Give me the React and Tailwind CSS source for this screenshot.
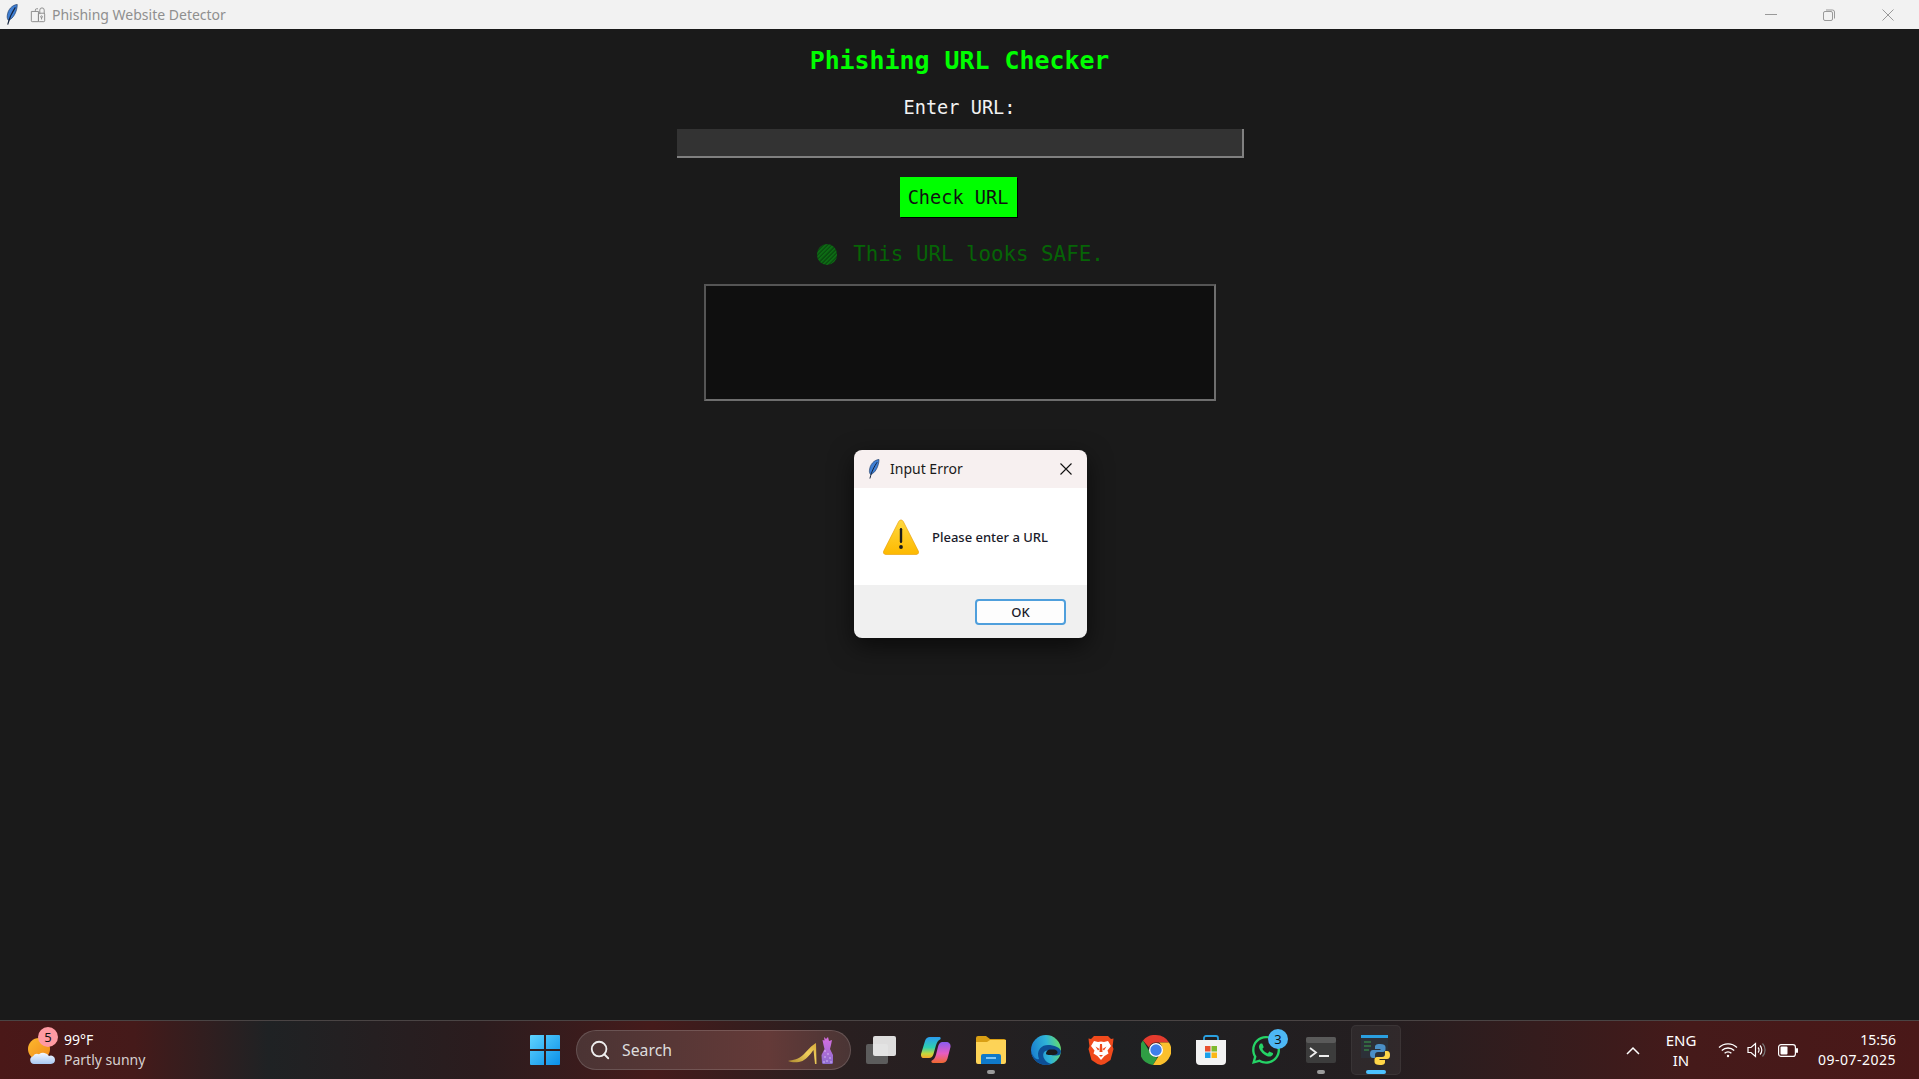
import React from 'react';
import { FaWhatsapp } from 'react-icons/fa';
import { Search } from 'lucide-react';

const Feather = ({ className }) => (
  <svg viewBox="0 0 12 22" className={className}>
    <path d="M11.500 .5C6 1 1.500 6 1 12.500c-.2 2 .3 3.500 1.200 4.500C7 16 11.500 8 11.500 .5z" fill="#3f7fd4" stroke="#1d3a66" strokeWidth="0.7" />
    <path d="M9.500 3.500C6.500 8 3.500 13 1.500 21.500" fill="none" stroke="#14233d" strokeWidth="1.100" />
  </svg>
);

const AppLockIcon = () => (
  <svg viewBox="0 0 18 18" className="w-[16px] h-[16px]" fill="none" stroke="#8c8c8c" strokeWidth="1.100">
    <path d="M6 5V3.500A1.500 1.500 0 0 1 7.500 2H9M1.500 5h8v11.500h-7a1 1 0 0 1-1-1z" />
    <path d="M11 8V3.500a2.500 2.500 0 0 1 5 0V8" />
    <rect x="9.500" y="7" width="7" height="9.500" rx="1" />
    <circle cx="13" cy="11" r="1" />
    <path d="M13 12v2" />
  </svg>
);

const WarningIcon = () => (
  <svg viewBox="0 0 36 36" className="w-[36px] h-[36px] shrink-0">
    <defs>
      <linearGradient id="warn" x1="0" y1="0" x2="0" y2="1">
        <stop offset="0" stopColor="#ffd83f" />
        <stop offset="1" stopColor="#fdb900" />
      </linearGradient>
    </defs>
    <path d="M18 1c1 0 1.800.6 2.300 1.500l15 29.500c.8 1.700-.2 3.500-2 3.500H2.700c-1.800 0-2.800-1.800-2-3.500l15-29.500C16.200 1.600 17 1 18 1z" fill="url(#warn)" stroke="#e79a00" strokeWidth="0.6" />
    <rect x="16.800" y="9" width="2.400" height="15" rx="1.200" fill="#1b1b1b" />
    <circle cx="18" cy="28" r="1.900" fill="#1b1b1b" />
  </svg>
);

const WeatherIcon = () => (
  <svg viewBox="0 0 30 30" className="w-[30px] h-[30px]">
    <defs>
      <linearGradient id="sun" x1="0" y1="0" x2="1" y2="1">
        <stop offset="0" stopColor="#fdb92e" />
        <stop offset="1" stopColor="#f08a1c" />
      </linearGradient>
      <linearGradient id="cloud" x1="0" y1="0" x2="0" y2="1">
        <stop offset="0" stopColor="#f4f8ff" />
        <stop offset="1" stopColor="#a9c8f2" />
      </linearGradient>
    </defs>
    <circle cx="12" cy="12" r="11" fill="url(#sun)" />
    <path d="M7 27a4 4 0 0 1-1-7.800 5 5 0 0 1 6-2 7 7 0 0 1 10 1.800 4.100 4.100 0 0 1 6 3.800 4.200 4.200 0 0 1-4 4.200z" fill="url(#cloud)" />
  </svg>
);

const WindowsLogo = () => (
  <svg viewBox="0 0 30 30" className="w-[30px] h-[30px]">
    <defs>
      <linearGradient id="win" x1="0" y1="0" x2="1" y2="1">
        <stop offset="0" stopColor="#5fd4ff" />
        <stop offset="1" stopColor="#0a8fe8" />
      </linearGradient>
    </defs>
    <path d="M1 0h13v14H0V1a1 1 0 0 1 1-1zM16 0h13a1 1 0 0 1 1 1v13H16zM0 16h14v14H1a1 1 0 0 1-1-1zM16 16h14v13a1 1 0 0 1-1 1H16z" fill="url(#win)" />
  </svg>
);

const SearchDecor = () => (
  <svg viewBox="0 0 50 28" className="w-[50px] h-[28px]">
    <defs>
      <linearGradient id="shoe" x1="0" y1="1" x2="1" y2="0">
        <stop offset="0" stopColor="#a8842c" />
        <stop offset="0.600" stopColor="#f0cf5c" />
        <stop offset="1" stopColor="#d6a83a" />
      </linearGradient>
      <linearGradient id="dress" x1="0" y1="0" x2="0" y2="1">
        <stop offset="0" stopColor="#d76ee0" />
        <stop offset="1" stopColor="#8c6ccf" />
      </linearGradient>
    </defs>
    <path d="M0 25c5-1 11-2 15-6 4-4 9-10 13-12l.5 21h-1.500L25.500 14c-3 4-7 9-11 11-4 1.500-10 2-14.500 0z" fill="url(#shoe)" />
    <path d="M36 1l2 2 2-2 1 4 3-1-1 5-1 4 3 6v8a2 2 0 0 1-2 1H36a2 2 0 0 1-2-1l-.5-8 3-6-1-4-1-5 2 .5z" fill="url(#dress)" />
    <path d="M37 15h.01M40 18h.01M37 21h.01M42 22h.01M39 25h.01M36 26h.01M43 26h.01" stroke="#e8d5ff" strokeWidth="1.300" strokeLinecap="round" />
  </svg>
);

const TaskViewIcon = () => (
  <div className="relative w-[30px] h-[28px]">
    <div className="absolute left-0 top-[8px] w-[22px] h-[20px] rounded-[2px] bg-[#5c5c5c]" />
    <div className="absolute left-[7px] top-0 w-[23px] h-[20px] rounded-[2px] bg-[#f2f2f2]/90" />
  </div>
);

const CopilotIcon = () => (
  <svg viewBox="0 0 30 28" className="w-[30px] h-[28px]">
    <defs>
      <linearGradient id="cop1" x1="0" y1="0" x2="0" y2="1">
        <stop offset="0" stopColor="#2b9cf0" />
        <stop offset="0.500" stopColor="#2fd0b0" />
        <stop offset="0.800" stopColor="#c7d83a" />
        <stop offset="1" stopColor="#f7a52e" />
      </linearGradient>
      <linearGradient id="cop2" x1="0" y1="0" x2="0" y2="1">
        <stop offset="0" stopColor="#8a5cf0" />
        <stop offset="0.550" stopColor="#e85cc0" />
        <stop offset="1" stopColor="#f0682e" />
      </linearGradient>
    </defs>
    <path d="M9 1h9c1.500 0 2 1 1.400 2.200-2.400 1.300-3.400 3-4.400 6L12.500 18c-.8 2.500-2 4-4.500 4H3c-2.500 0-3.500-2-2.800-4.500L4 5c.8-2.700 2.500-4 5-4z" fill="url(#cop1)" />
    <path d="M21 6h4c3 0 5 2 4.500 5l-3 11.500c-.8 3-2.700 4.500-5.500 4.500h-9c-1.500 0-2-1-1.400-2.200 2.400-1.300 3.400-3 4.400-6l2-8c.6-2.600 2-4.800 4-4.800z" fill="url(#cop2)" />
  </svg>
);

const ExplorerIcon = () => (
  <svg viewBox="0 0 30 28" className="w-[30px] h-[28px]">
    <path d="M0 2a2 2 0 0 1 2-2h8l4 3h14a2 2 0 0 1 2 2v6H0z" fill="#d99f14" />
    <path d="M0 6h11l3-2h16v22a2 2 0 0 1-2 2H2a2 2 0 0 1-2-2z" fill="#fdd357" />
    <path d="M5 28V20a2 2 0 0 1 2-2h16a2 2 0 0 1 2 2v8z" fill="#0f79c9" />
    <rect x="10" y="21" width="10" height="2" fill="#7fc6f5" />
  </svg>
);

const EdgeIcon = () => (
  <svg viewBox="0 0 30 30" className="w-[30px] h-[30px]">
    <defs>
      <linearGradient id="edgeA" x1="0" y1="0.500" x2="1" y2="0.300">
        <stop offset="0" stopColor="#1a7fd0" />
        <stop offset="0.550" stopColor="#2fb4d8" />
        <stop offset="1" stopColor="#66dd6a" />
      </linearGradient>
    </defs>
    <circle cx="15" cy="15" r="15" fill="url(#edgeA)" />
    <path d="M30 16c0 3-1.500 4.500-4.500 4.500-3 0-5 0-6.500-1-1.500-1-1.800-2.500-1-4-3-.5-5.500 1-5.800 4-.3 4 3 8 8 9.500-2 .7-3.500 1-5 1C6.500 30 0 23 0 15 1 21 5 25.500 8 24c-1.500-3.500-1.500-7.500 1-10.500 2-2.500 5-3.500 8-3.500 6 0 12 2.500 13 6z" fill="#0d4f96" />
    <path d="M15 19c0-2.500 1.500-4 3.500-4.500h5c2 .5 3 1.500 3 3 0 1.500-1.500 2.500-4 2.500-3 0-7.500 0-7.500-1z" fill="#1b1b1d" />
  </svg>
);

const BraveIcon = () => (
  <svg viewBox="0 0 26 30" className="w-[26px] h-[30px]">
    <path d="M6 1h14l3 3 2.500-.5L25 8l-.5 3 1 3-3 11-6 4-3.500 1-3.500-1-6-4-3-11 1-3L1 8 .5 3.500 3 4z" fill="#f04a1c" />
    <path d="M6 6l4 1 3-.6 3 .6 4-1 3 5-3.500 4.500 1 3-4 2.500-3.500 4-3.500-4-4-2.500 1-3L3 11z" fill="#fff" />
    <path d="M7.500 11.500l4 2.500-1.500 1.500zM18.500 11.500l-4 2.500 1.500 1.500zM11 20h4l-2 2zM12 9h2l.5 8h-3z" fill="#f04a1c" />
  </svg>
);

const ChromeIcon = () => (
  <svg viewBox="0 0 30 30" className="w-[30px] h-[30px]">
    <path d="M15 0a15 15 0 0 1 13 7.500H15a7.500 7.500 0 0 0-7 5L2 5.500A15 15 0 0 1 15 0z" fill="#e33b2e" />
    <path d="M2 5.500l6.500 11a7.500 7.500 0 0 0 8 5.800L12 30A15 15 0 0 1 2 5.500z" fill="#2f9e44" />
    <path d="M28 7.500A15 15 0 0 1 12 30l7-11a7.500 7.500 0 0 0-1-11.500z" fill="#fbc02d" />
    <circle cx="15" cy="15" r="7" fill="#fff" />
    <circle cx="15" cy="15" r="5.700" fill="#3f7fea" />
  </svg>
);

const StoreIcon = () => (
  <svg viewBox="0 0 30 30" className="w-[30px] h-[30px]">
    <path d="M8 6V3a2 2 0 0 1 2-2h10a2 2 0 0 1 2 2v3" fill="none" stroke="#2aa0e0" strokeWidth="1.800" />
    <path d="M0 5h30v21a4 4 0 0 1-4 4H4a4 4 0 0 1-4-4z" fill="#f3f3f3" />
    <rect x="9" y="11" width="5.500" height="5.500" fill="#e8502f" />
    <rect x="15.500" y="11" width="5.500" height="5.500" fill="#7db92d" />
    <rect x="9" y="17.500" width="5.500" height="5.500" fill="#1aa0ea" />
    <rect x="15.500" y="17.500" width="5.500" height="5.500" fill="#fbb717" />
  </svg>
);

const TerminalIcon = () => (
  <svg viewBox="0 0 30 26" className="w-[30px] h-[26px]">
    <rect width="30" height="26" rx="2" fill="#3c3c3c" />
    <rect width="30" height="6" rx="2" fill="#5a5a5a" />
    <path d="M4 11l6 4.500L4 20" fill="none" stroke="#eee" strokeWidth="1.800" />
    <rect x="13" y="18" width="10" height="2" fill="#eee" />
  </svg>
);

const PythonAppIcon = () => (
  <svg viewBox="0 0 30 30" className="w-[30px] h-[30px]">
    <rect x="0" y="0" width="27" height="23" fill="#2c3038" />
    <rect x="0" y="0" width="27" height="3" fill="#2a9fe0" />
    <path d="M3 7h7M3 11h7M3 15h5" stroke="#3aa04a" strokeWidth="1.200" />
    <g transform="translate(9 9)">
      <path d="M10 0C5.500 0 5 1.500 5 3v2h5.500v1H3C1 6 0 7.500 0 10s1 4 3 4h2v-3c0-2 1-3 3-3h5c1.500 0 2.500-1 2.500-2.500V3C15.500 1 13.500 0 10 0z" fill="#4a8fc7" />
      <path d="M10 21c4.500 0 5-1.500 5-3v-2H9.500v-1H17c2 0 3-1.500 3-4s-1-4-3-4h-2v3c0 2-1 3-3 3H7c-1.500 0-2.500 1-2.500 2.500V18C4.500 20 6.500 21 10 21z" fill="#ffd648" />
    </g>
  </svg>
);

const WifiIcon = () => (
  <svg viewBox="0 0 20 16" className="w-[20px] h-[16px]" fill="none" stroke="#fff" strokeWidth="1.300">
    <path d="M1 5.500a13 13 0 0 1 18 0M3.800 8.500a9 9 0 0 1 12.400 0M6.600 11.300a5 5 0 0 1 6.800 0" />
    <circle cx="10" cy="14" r="1.200" fill="#fff" stroke="none" />
  </svg>
);

const SpeakerIcon = () => (
  <svg viewBox="0 0 20 16" className="w-[20px] h-[16px]" fill="none" stroke="#fff" strokeWidth="1.200">
    <path d="M1 5.500h3L8.500 1.500v13L4 10.500H1z" />
    <path d="M11 5.500a3.500 3.500 0 0 1 0 5M13 3.500a6.500 6.500 0 0 1 0 9" />
    <path d="M15.500 1.500a9.500 9.500 0 0 1 0 13" stroke="#777" />
  </svg>
);

const BatteryIcon = () => (
  <svg viewBox="0 0 20 13" className="w-[20px] h-[13px]">
    <rect x="0.600" y="0.600" width="16.800" height="11.800" rx="2.500" fill="none" stroke="#fff" strokeWidth="1.200" />
    <rect x="2.500" y="2.500" width="7" height="8" rx="1" fill="#fff" />
    <rect x="18" y="4" width="2" height="5" rx="1" fill="#fff" />
  </svg>
);

const TaskbarSlot = ({ children, pip, badge }) => (
  <div className="relative w-[55px] h-[50px] flex items-center justify-center">
    {children}
    {badge && (
      <span className="absolute left-[30px] top-[4px] w-[20px] h-[20px] rounded-full bg-[#4db8f5] text-[#111] text-[13px] leading-[20px] text-center">{badge}</span>
    )}
    {pip && <span className="absolute left-[23.500px] bottom-[1px] w-[8px] h-[4px] rounded-full bg-[#9a9a9a]" />}
  </div>
);

const ActiveSlot = ({ children }) => (
  <div className="relative ml-[3px] w-[50px] h-[50px] flex items-center justify-center rounded-[5px] bg-white/5 border border-white/5">
    {children}
    <span className="absolute left-[14px] bottom-[0px] w-[20px] h-[4px] rounded-full bg-[#4cc2ff]" />
  </div>
);

const Taskbar = () => (
  <div className="h-[59px] shrink-0 flex items-center border-t border-[#4a4444] bg-[linear-gradient(90deg,#4a1818_0%,#451a1a_7%,#1f2224_14%,#2b1c1e_25%,#451b1b_34%,#2a1f20_43%,#1f2022_58%,#241e20_72%,#451a1a_88%,#4a1818_100%)] text-white font-['Noto_Sans',sans-serif]">
    <div className="w-[530px] shrink-0 flex items-center pl-[27px]">
      <div className="relative w-[30px] h-[30px] mt-[4px]">
        <WeatherIcon />
        <span className="absolute left-[11px] top-[-10px] w-[20px] h-[20px] rounded-full bg-[#ff9aa2] text-[#111] text-[13px] leading-[20px] text-center">5</span>
      </div>
      <div className="ml-[7px] flex flex-col mt-[-2px]">
        <span className="text-[14px] leading-[21px]">99°F</span>
        <span className="text-[14px] leading-[20px] text-[#d6d0d0]">Partly sunny</span>
      </div>
    </div>

    <WindowsLogo />
    <div className="ml-[16px] w-[275px] h-[40px] rounded-full border border-white/15 bg-[linear-gradient(90deg,#4b3434,#643a38_70%,#4a3535)] flex items-center pl-[12px] pr-[12px]">
      <Search className="w-[22px] h-[22px] text-[#eeeeee]" strokeWidth={2} />
      <span className="ml-[11px] mt-[1px] text-[15.800px] text-[#dddddd]">Search</span>
      <div className="ml-auto"><SearchDecor /></div>
    </div>

    <div className="ml-[2px] flex items-center">
      <TaskbarSlot><TaskViewIcon /></TaskbarSlot>
      <TaskbarSlot><CopilotIcon /></TaskbarSlot>
      <TaskbarSlot pip><ExplorerIcon /></TaskbarSlot>
      <TaskbarSlot><EdgeIcon /></TaskbarSlot>
      <TaskbarSlot><BraveIcon /></TaskbarSlot>
      <TaskbarSlot><ChromeIcon /></TaskbarSlot>
      <TaskbarSlot><StoreIcon /></TaskbarSlot>
      <TaskbarSlot badge="3"><FaWhatsapp className="w-[32px] h-[32px] text-[#25d366]" /></TaskbarSlot>
      <TaskbarSlot pip><TerminalIcon /></TaskbarSlot>
      <ActiveSlot><PythonAppIcon /></ActiveSlot>
    </div>

    <div className="ml-auto pr-[23px] flex items-center">
      <svg viewBox="0 0 14 9" className="w-[14px] h-[9px]" fill="none" stroke="#fff" strokeWidth="1.500"><path d="M1 8l6-6 6 6" /></svg>
      <div className="ml-[21px] w-[40px] flex flex-col items-center text-[15px] leading-[20px]">
        <span>ENG</span>
        <span>IN</span>
      </div>
      <div className="ml-[17px]"><WifiIcon /></div>
      <div className="ml-[9px]"><SpeakerIcon /></div>
      <div className="ml-[11px]"><BatteryIcon /></div>
      <div className="ml-[12px] w-[86px] flex flex-col items-end text-[14px] leading-[20px]">
        <span>15:56</span>
        <span className="tracking-[0.5px]">09-07-2025</span>
      </div>
    </div>
  </div>
);

const ErrorDialog = () => (
  <div className="absolute left-[854px] top-[450px] w-[233px] h-[188px] rounded-[8px] overflow-hidden flex flex-col shadow-[0_8px_24px_rgba(0,0,0,0.6)] font-['Noto_Sans',sans-serif]">
    <div className="h-[38px] bg-[#f7f0f0] flex items-center pl-[14px] pr-[15px]">
      <Feather className="w-[12px] h-[20px]" />
      <span className="ml-[10px] mt-[-1px] text-[14px] text-[#1a1a1a]">Input Error</span>
      <svg viewBox="0 0 12 12" className="ml-auto w-[12px] h-[12px]" stroke="#111" strokeWidth="1.100"><path d="M0.500 0.500l11 11M11.500 0.500l-11 11" /></svg>
    </div>
    <div className="h-[97px] bg-white flex items-center pl-[29px]">
      <WarningIcon />
      <span className="ml-[13px] mt-[2px] text-[13px] font-medium text-[#1a1a2a]">Please enter a URL</span>
    </div>
    <div className="flex-1 bg-[#f0f0f0] flex items-start justify-end pt-[14px] pr-[21px]">
      <button className="w-[91px] h-[26px] rounded-[4px] border-2 border-[#4f9fdc] bg-[#fdfdfd] text-[13px] font-medium leading-none text-[#1a1a2a]">OK</button>
    </div>
  </div>
);

const App = () => (
  <div className="relative h-screen w-screen overflow-hidden flex flex-col bg-[#1a1a1a]">
    <div className="h-[29px] shrink-0 bg-[#f2f2f2] flex items-center font-['Noto_Sans',sans-serif]">
      <Feather className="ml-[6px] w-[12px] h-[21px]" />
      <div className="ml-[12px]"><AppLockIcon /></div>
      <span className="ml-[6px] text-[14px] text-[#8f8f8f]">Phishing Website Detector</span>
      <div className="ml-auto flex items-center pr-[1px]">
        <div className="w-[58px] flex justify-center">
          <div className="w-[12px] h-[1px] bg-[#999]" />
        </div>
        <div className="w-[58px] flex justify-center">
          <svg viewBox="0 0 12 12" className="w-[12px] h-[12px]" fill="none" stroke="#999" strokeWidth="1"><rect x="0.500" y="2.500" width="9" height="9" rx="1.500" /><path d="M3 1h6.500a2 2 0 0 1 2 2v6.500" /></svg>
        </div>
        <div className="w-[60px] flex justify-center">
          <svg viewBox="0 0 12 12" className="w-[12px] h-[12px]" stroke="#999" strokeWidth="1"><path d="M0.500 0.500l11 11M11.500 0.500l-11 11" /></svg>
        </div>
      </div>
    </div>

    <div className="flex-1 flex flex-col items-center font-['DejaVu_Sans_Mono',monospace]">
      <h1 className="mt-[17px] text-[24.900px] leading-[30px] font-bold text-[#00ff00]">Phishing URL Checker</h1>
      <label className="mt-[20px] text-[18.600px] leading-[24px] text-[#f2f2f2]">Enter URL:</label>
      <div className="mt-[9px] ml-[1px] w-[567px] h-[29px] bg-[#333333] border-r-2 border-b-2 border-[#808080]" />
      <button className="mt-[19px] mr-[3px] w-[117px] h-[40px] pt-[1px] bg-[#00ff00] text-[18.600px] text-[#111] shadow-[1px_1px_0_#000]">Check URL</button>
      <div className="mt-[25px] ml-[2px] h-[24px] flex items-center">
        <span className="w-[20px] h-[21px] rounded-full bg-[repeating-linear-gradient(135deg,#0d6b14_0px,#0d6b14_1px,#0a4f10_2px,#0a4f10_3px)]" />
        <span className="ml-[16px] mt-[2px] text-[20.800px] text-[#066406]">This URL looks SAFE.</span>
      </div>
      <div className="mt-[18px] w-[512px] h-[117px] bg-[#0f0f0f] border-2 border-t-[#555555] border-l-[#555555] border-r-[#6e6e6e] border-b-[#6e6e6e]" />
    </div>

    <Taskbar />
    <ErrorDialog />
  </div>
);

export default App;
